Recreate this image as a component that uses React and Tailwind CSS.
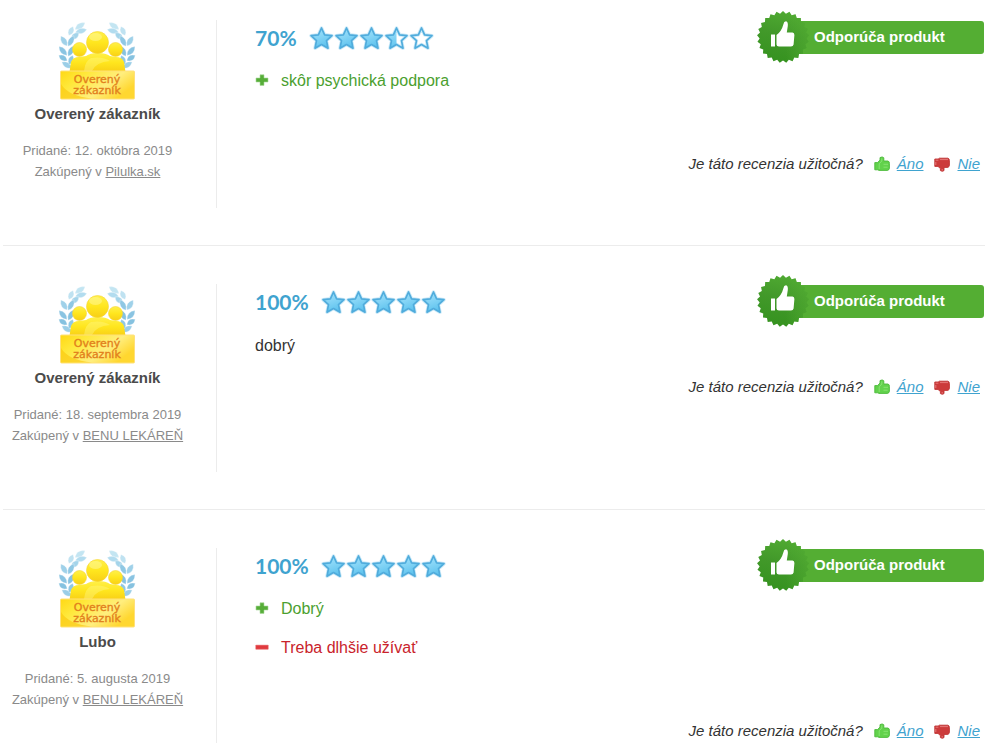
import React from "react";

const reviews = [
  {
    name: "Overený zákazník",
    added: "12. októbra 2019",
    shop: "Pilulka.sk",
    rating: 70,
    pros: ["skôr psychická podpora"],
    cons: [],
  },
  {
    name: "Overený zákazník",
    added: "18. septembra 2019",
    shop: "BENU LEKÁREŇ",
    rating: 100,
    pros: [],
    cons: [],
    text: "dobrý",
  },
  {
    name: "Lubo",
    added: "5. augusta 2019",
    shop: "BENU LEKÁREŇ",
    rating: 100,
    pros: ["Dobrý"],
    cons: ["Treba dlhšie užívať"],
  },
];

const STAR = "M12.5 2 L15.6 8.8 L23 9.7 L17.5 14.7 L19 22.2 L12.5 18.5 L6 22.2 L7.5 14.7 L2 9.7 L9.4 8.8 Z";

// x, y, rotation, half-length and colour of each leaf in the left laurel branch
const LEAVES = [
  [22, 6, -32, 6, "#c3e5f2"],
  [23, 11, -14, 6, "#b2dcef"],
  [13, 11, -66, 5, "#bfe2f1"],
  [17, 16, -38, 5, "#a4d4ea"],
  [6, 21, 58, 6, "#9fd1e9"],
  [13, 21, -62, 6, "#8fc8e4"],
  [5, 31, 48, 6, "#8ac4e2"],
  [13, 31, -62, 6, "#86c2e0"],
  [5, 38, 32, 5, "#86c2e0"],
  [9, 45, 30, 6, "#9bcee7"],
  [13, 40, -70, 5, "#90c8e4"],
];

function Laurel() {
  return LEAVES.map(([x, y, angle, length, color]) => (
    <path
      key={`${x}-${y}`}
      d={`M${-length} 0 Q0 -5.4 ${length} 0 Q0 5.4 ${-length} 0 Z`}
      transform={`translate(${x} ${y}) rotate(${angle})`}
      fill={color}
      stroke="#ffffff"
      strokeOpacity="0.5"
      strokeWidth="0.6"
    />
  ));
}

function VerifiedBadge({ id }) {
  return (
    <svg viewBox="0 0 80 80" className="h-20 w-20" role="img" aria-label="Overený zákazník">
      <defs>
        <linearGradient id={`${id}-body`} x1="0" y1="0" x2="0" y2="1">
          <stop offset="0" stopColor="#fff04a" />
          <stop offset="0.5" stopColor="#ffe61e" />
          <stop offset="1" stopColor="#f8cf16" />
        </linearGradient>
        <linearGradient id={`${id}-plate`} x1="0" y1="0" x2="1" y2="0.5">
          <stop offset="0" stopColor="#ffd814" />
          <stop offset="0.3" stopColor="#ffe83a" />
          <stop offset="0.7" stopColor="#ffee7e" />
          <stop offset="1" stopColor="#ffd730" />
        </linearGradient>
      </defs>
      <Laurel />
      <g transform="translate(78 0) scale(-1 1)">
        <Laurel />
      </g>
      <g fill={`url(#${id}-body)`}>
        <circle cx="21.5" cy="29.5" r="7" stroke="#f7d536" strokeWidth="0.6" />
        <circle cx="57.5" cy="29.5" r="7" stroke="#f7d536" strokeWidth="0.6" />
        <path d="M11.5 52 L13 42 Q15 37 21 37 L28 36 Q32 33 40 33 Q48 33 52 36 L58 37 Q64 37 66 42 L67.5 52 Z" />
        <circle cx="39.5" cy="22.5" r="11" stroke="#f7d536" strokeWidth="0.6" />
      </g>
      <ellipse cx="37.5" cy="17" rx="6.5" ry="4" fill="#fffa9c" opacity="0.5" />
      <path d="M26 51 Q27 41 33 38 Q45 36 52 41 Q38 42 34 51 Z" fill="#fff88a" opacity="0.4" />
      <rect x="2.5" y="51" width="74" height="28" rx="1" fill={`url(#${id}-plate)`} stroke="#ffe07a" />
      <path d="M3 78.5 V64 Q10 76 34 78.5 Z" fill="#fbc70e" opacity="0.65" />
      <text x="39" fontSize="11" textAnchor="middle" fontFamily="DejaVu Sans, sans-serif" fill="#e2801c" stroke="#e2801c" strokeWidth="0.35">
        <tspan x="39" y="63">Overený</tspan>
        <tspan x="39" y="74">zákazník</tspan>
      </text>
    </svg>
  );
}

function Stars({ rating, id }) {
  return (
    <svg viewBox="0 0 125 25" className="h-[25px] w-[125px]" role="img" aria-label={`${rating} %`}>
      <defs>
        <linearGradient id={`${id}-star`} x1="0" y1="0" x2="0.4" y2="1">
          <stop offset="0" stopColor="#a4e2fa" />
          <stop offset="0.5" stopColor="#86d5f6" />
          <stop offset="1" stopColor="#5fc3ee" />
        </linearGradient>
        <clipPath id={`${id}-clip`}>
          <rect width={(rating / 100) * 125} height="25" />
        </clipPath>
      </defs>
      {[0, 25, 50, 75, 100].map((x) => (
        <path key={x} d={STAR} transform={`translate(${x} 0)`} fill="#fff" stroke="#cdeaf8" strokeWidth="3.4" strokeLinejoin="round" />
      ))}
      <g clipPath={`url(#${id}-clip)`}>
        {[0, 25, 50, 75, 100].map((x) => (
          <path key={x} d={STAR} transform={`translate(${x} 0)`} fill={`url(#${id}-star)`} />
        ))}
      </g>
      {[0, 25, 50, 75, 100].map((x) => (
        <path key={x} d={STAR} transform={`translate(${x} 0)`} fill="none" stroke="#50acdc" strokeWidth="1.7" strokeLinejoin="round" />
      ))}
    </svg>
  );
}

const TEETH = 25;
const sealPoints = Array.from({ length: TEETH * 2 }, (_, i) => {
  const radius = i % 2 ? 23.4 : 26;
  const angle = (i * Math.PI) / TEETH - Math.PI / 2;
  return `${(26 + radius * Math.cos(angle)).toFixed(2)},${(26 + radius * Math.sin(angle)).toFixed(2)}`;
}).join(" ");

function RecommendBanner({ id }) {
  return (
    <div className="relative mt-px mr-px h-[33px] w-[203px] rounded-[3px] bg-[#54ae33] pl-[33px] text-[15px] leading-8 font-bold text-white">
      <svg viewBox="0 0 52 52" className="absolute -top-[10px] -left-6 h-[52px] w-[52px]" aria-hidden="true">
        <defs>
          <linearGradient id={`${id}-seal`} x1="0.6" y1="0" x2="0.4" y2="1">
            <stop offset="0" stopColor="#50aa32" />
            <stop offset="0.45" stopColor="#42992a" />
            <stop offset="1" stopColor="#35921f" />
          </linearGradient>
          <linearGradient id={`${id}-fade`} x1="0" y1="0" x2="1" y2="0">
            <stop offset="0.55" stopColor="#54ae33" stopOpacity="0" />
            <stop offset="1" stopColor="#54ae33" stopOpacity="0.6" />
          </linearGradient>
        </defs>
        <polygon points={sealPoints} fill={`url(#${id}-seal)`} />
        <polygon points={sealPoints} fill={`url(#${id}-fade)`} />
        <path d="M14 23.5 H18 V35.5 H14 Z" fill="#fff" />
        <path d="M19.5 24 Q24.5 20.5 26.5 13 Q26.8 10.3 29 10.3 Q31.3 11 30.8 15 L29.8 21.5 H35.5 Q37.4 21.7 37.4 24 L36.6 33.5 Q36.2 35.5 34 35.5 H22 Q19.5 35.5 19.5 33.5 Z" fill="#fff" />
      </svg>
      Odporúča produkt
    </div>
  );
}

function ThumbUp() {
  return (
    <svg viewBox="0 0 16 16" className="h-4 w-4" aria-hidden="true">
      <path d="M0.8 6.6 H3.6 L6 4 V1.6 Q8.4 0.2 9.8 1.8 V5 H13.8 Q15.6 5.4 15.4 7.4 V12.4 Q15 14.2 13.4 14.4 H5 L3.8 13.8 H0.8 Z" fill="#62d24c" stroke="#4cb93a" strokeWidth="0.9" strokeLinejoin="round" />
      <path d="M7.8 2.4 V5 L5.2 7.8 V13 M9.5 8.3 H14 M9.5 11.2 H13.6" fill="none" stroke="#8be575" strokeWidth="0.9" />
    </svg>
  );
}

function ThumbDown() {
  return (
    <svg viewBox="0 0 16 16" className="h-4 w-4" aria-hidden="true">
      <path d="M0.8 3 H4.2 L5.4 2.2 H13.8 Q15.4 2.6 15.4 4.4 V9 Q15.4 11 13.8 11.4 H10 V14.6 Q8.4 16 6.4 14.6 V12.6 L4 10.4 H0.8 Z" fill="#cc3b3b" stroke="#bf3535" strokeWidth="0.9" strokeLinejoin="round" />
      <path d="M1.6 4.2 H4.4 M6 3.6 H14 M1.8 6 V9 M8.2 13 V14.6" fill="none" stroke="#e88080" strokeWidth="0.9" />
    </svg>
  );
}

function PointIcon({ positive }) {
  return (
    <svg viewBox="0 0 14 14" className="h-[14px] w-[14px]" aria-hidden="true">
      {positive ? (
        <path d="M5 0.8 H9 V4 H13 V8 H9 V11.4 H5 V8 H1 V4 H5 Z" fill="#56ad38" stroke="#a9d89a" strokeWidth="0.6" />
      ) : (
        <rect x="0.6" y="4" width="12.8" height="4.4" rx="0.6" fill="#e03a3e" stroke="#f3a6a8" strokeWidth="0.6" />
      )}
    </svg>
  );
}

function Points({ items, positive }) {
  return items.map((item) => (
    <li
      key={item}
      className={`flex h-[39px] items-center gap-3 ${positive ? "text-[#4ba02f]" : "text-[#c9232b]"}`}
    >
      <PointIcon positive={positive} />
      <span>{item}</span>
    </li>
  ));
}

function Review({ review, id }) {
  const { name, added, shop, rating, pros, cons, text } = review;
  return (
    <article className="flex border-b border-[#ececec] pt-[38px] pb-[37px] last:border-b-0">
      <aside className="flex w-[214px] shrink-0 flex-col items-center border-r border-[#ececec] pr-6 text-center">
        <VerifiedBadge id={id} />
        <h3 className="mt-1 text-[15px] leading-5 font-bold text-[#4b4b4b]">{name}</h3>
        <p className="mt-4 text-[13px] leading-[21px] text-[#8a8a8a]">
          Pridané: {added}
          <br />
          Zakúpený v{" "}
          <a href="#obchod" className="underline">
            {shop}
          </a>
        </p>
      </aside>
      <div className="min-h-[188px] flex-1 pl-[38px]">
        <div className="flex h-9 items-start justify-between">
          <div className="flex h-9 items-center gap-3">
            <strong className="font-[Lato,sans-serif] text-[21px] leading-9 font-bold text-[#3fa3cf]">{rating}%</strong>
            <Stars rating={rating} id={id} />
          </div>
          <RecommendBanner id={id} />
        </div>
        {text ? (
          <p className="mt-[14px] mb-[17px] leading-6">{text}</p>
        ) : (
          <ul className="mt-[5px] mb-[52px]">
            <Points items={pros} positive />
            <Points items={cons} positive={false} />
          </ul>
        )}
        <div className="flex h-6 items-center justify-end gap-[11px] pr-[5px] text-[15px] leading-6 italic">
          <span>Je táto recenzia užitočná?</span>
          <span className="flex items-center gap-[7px]">
            <ThumbUp />
            <a href="#ano" className="text-[#3fa3cf] underline">
              Áno
            </a>
          </span>
          <span className="flex items-center gap-[7px]">
            <ThumbDown />
            <a href="#nie" className="text-[#3fa3cf] underline">
              Nie
            </a>
          </span>
        </div>
      </div>
    </article>
  );
}

export default function App() {
  return (
    <div className="h-screen overflow-hidden bg-white font-['Liberation_Sans',Arial,sans-serif] text-base text-[#333]">
      <main className="-mt-[18px] pr-[13px] pl-[3px]">
        {reviews.map((review, i) => (
          <Review key={i} review={review} id={`review-${i}`} />
        ))}
      </main>
    </div>
  );
}
